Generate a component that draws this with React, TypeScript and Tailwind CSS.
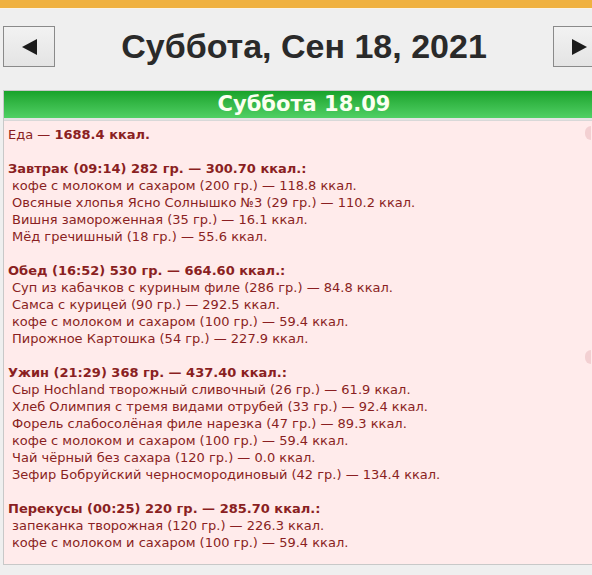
import React from "react";

type Meal = { title: string; items: string[] };

const meals: Meal[] = [
  {
    title: "Завтрак (09:14) 282 гр. — 300.70 ккал.:",
    items: [
      "кофе с молоком и сахаром (200 гр.) — 118.8 ккал.",
      "Овсяные хлопья Ясно Солнышко №3 (29 гр.) — 110.2 ккал.",
      "Вишня замороженная (35 гр.) — 16.1 ккал.",
      "Мёд гречишный (18 гр.) — 55.6 ккал.",
    ],
  },
  {
    title: "Обед (16:52) 530 гр. — 664.60 ккал.:",
    items: [
      "Суп из кабачков с куриным филе (286 гр.) — 84.8 ккал.",
      "Самса с курицей (90 гр.) — 292.5 ккал.",
      "кофе с молоком и сахаром (100 гр.) — 59.4 ккал.",
      "Пирожное Картошка (54 гр.) — 227.9 ккал.",
    ],
  },
  {
    title: "Ужин (21:29) 368 гр. — 437.40 ккал.:",
    items: [
      "Сыр Hochland творожный сливочный (26 гр.) — 61.9 ккал.",
      "Хлеб Олимпия с тремя видами отрубей (33 гр.) — 92.4 ккал.",
      "Форель слабосолёная филе нарезка (47 гр.) — 89.3 ккал.",
      "кофе с молоком и сахаром (100 гр.) — 59.4 ккал.",
      "Чай чёрный без сахара (120 гр.) — 0.0 ккал.",
      "Зефир Бобруйский черносмородиновый (42 гр.) — 134.4 ккал.",
    ],
  },
  {
    title: "Перекусы (00:25) 220 гр. — 285.70 ккал.:",
    items: [
      "запеканка творожная (120 гр.) — 226.3 ккал.",
      "кофе с молоком и сахаром (100 гр.) — 59.4 ккал.",
    ],
  },
];

function NavButton({ dir }: { dir: "left" | "right" }) {
  return (
    <div className="w-[52px] h-[41px] border border-[#8a8a8a] bg-gradient-to-b from-[#f2f2f2] to-[#e4e4e4] flex items-center justify-center shrink-0">
      <svg width="15" height="16" viewBox="0 0 15 16">
        {dir === "left" ? (
          <polygon points="15,0 15,16 0,8" fill="#1c1c1c" />
        ) : (
          <polygon points="0,0 0,16 15,8" fill="#1c1c1c" />
        )}
      </svg>
    </div>
  );
}

export default function App() {
  return (
    <div className="w-[592px] h-[575px] overflow-hidden bg-[#efefef]">
      <div className="w-[605px]">
        <div className="h-[8px] bg-[#f0b13f]" />
        <div className="h-[1px] bg-[#fbf3e6]" />
        <div className="flex items-center pl-[3px] pt-[17px] h-[58px]">
          <NavButton dir="left" />
          <div className="flex-1 text-center font-['Liberation_Sans',Arial,sans-serif] font-bold text-[34px] leading-none text-[#2a2a2a] -mt-[2px]">
            Суббота, Сен 18, 2021
          </div>
          <NavButton dir="right" />
        </div>
        <div className="mt-[23px] ml-[3px] border border-[#c8c8c8] bg-[#f7f7f7]">
          <div className="h-[27px] bg-gradient-to-b from-[#17a32a] to-[#4fd064] flex items-center justify-center">
            <span className="font-['DejaVu_Sans',sans-serif] font-bold text-[21px] leading-none text-[#fbfff0]">
              Суббота 18.09
            </span>
          </div>
          <div className="h-[2px] bg-[#e3e3e3]" />
          <div className="relative bg-[#ffebeb] border-t border-[#d8d8d8] pl-[4px] pt-[5px] pb-[7px] font-['DejaVu_Sans',sans-serif] text-[13px] leading-[17px] text-[#8a1f22] h-[444px]">
            <div className="absolute top-[5px] right-[13px] w-[6px] h-[14px] rounded-l-full bg-[#f3d0d2]" />
            <div className="absolute top-[229px] right-[13px] w-[6px] h-[14px] rounded-l-full bg-[#f3d0d2]" />
            <div>
              Еда — <b>1688.4 ккал.</b>
            </div>
            {meals.map((m) => (
              <div key={m.title}>
                <div className="h-[17px]" />
                <div className="font-bold">{m.title}</div>
                {m.items.map((it, i) => (
                  <div key={i} className="pl-[4px]">
                    {it}
                  </div>
                ))}
              </div>
            ))}
          </div>
        </div>
      </div>
    </div>
  );
}
